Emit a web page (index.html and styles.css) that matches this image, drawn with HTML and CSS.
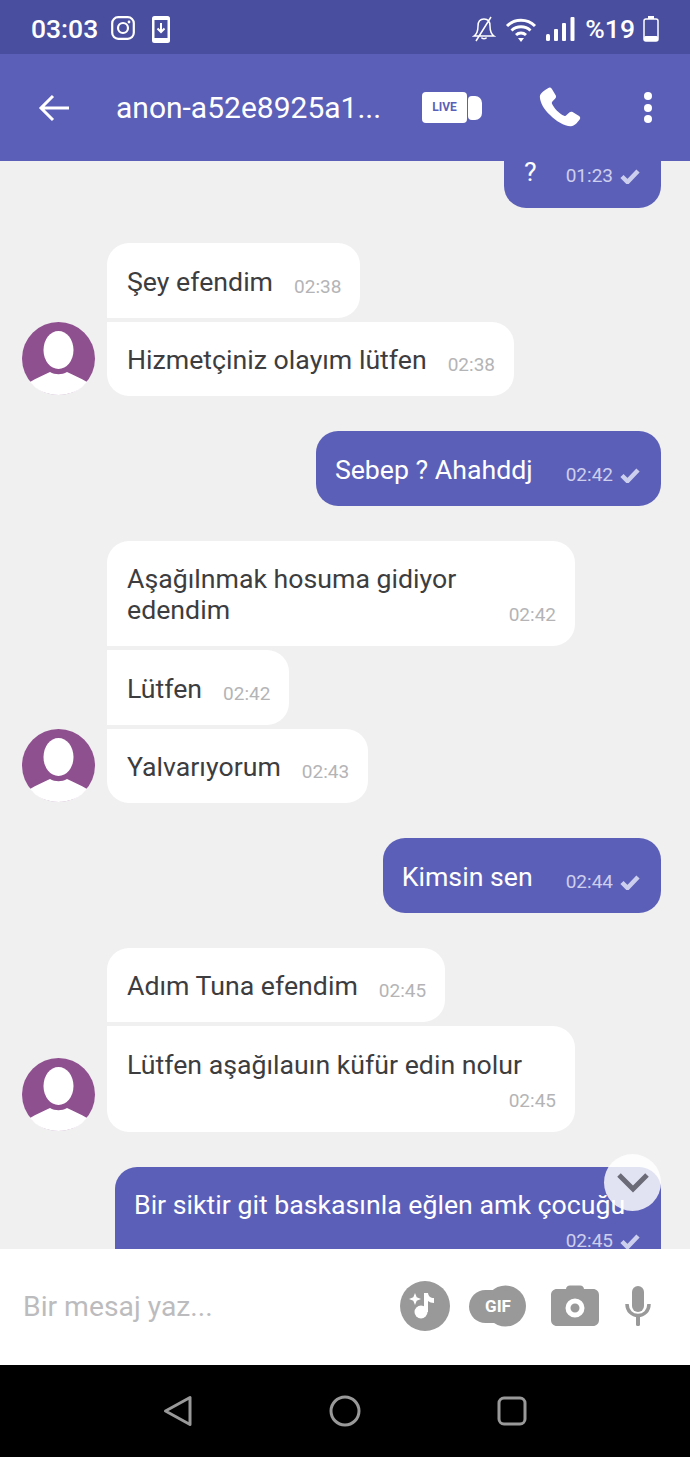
FILE: index.html
```html
<!DOCTYPE html>
<html lang="en">
<head>
  <meta charset="UTF-8" />
  <title>anon-a52e8925a1</title>
  <link rel="stylesheet" href="styles.css">
</head>
<body>
  <div class="phone">
    <div class="status">
      <span class="clock">03:03</span>
      <svg class="st-insta" viewBox="0 0 24 24" width="24" height="24"><rect x="1.2" y="1.2" width="21.6" height="21.6" rx="6" fill="none" stroke="#fff" stroke-width="2.2"/><circle cx="12" cy="12" r="5" fill="none" stroke="#fff" stroke-width="2.2"/><circle cx="18" cy="6" r="1.4" fill="#fff"/></svg>
      <svg class="st-dl" viewBox="0 0 18 27" width="18" height="27"><rect width="18" height="27" rx="2.5" fill="#fff"/><rect x="2.5" y="4" width="13" height="18" fill="#4a4e9e"/><path d="M9 7v9M5.500 12.500 9 16l3.500-3.500" fill="none" stroke="#fff" stroke-width="2"/></svg>
      <span class="st-right">
        <svg viewBox="0 0 24 26" width="24" height="26"><path d="M12 3c-4 0-6 3-6 7 0 5-1 8-4 10h20c-3-2-4-5-4-10 0-4-2-7-6-7zM9.500 21.500c.5 1.500 4.500 1.500 5 0M19 1 4 25" fill="none" stroke="#fff" stroke-width="1.500"/></svg>
        <svg class="st-wifi" viewBox="0 0 32 25" width="32" height="25"><path d="M2 9a20 20 0 0 1 28 0M6.500 13.500a14 14 0 0 1 19 0M11 18a7.500 7.500 0 0 1 10 0" fill="none" stroke="#fff" stroke-width="3"/><path d="M13 21h6l-3 4z" fill="#fff"/></svg>
        <svg class="st-sig" viewBox="0 0 29 24" width="29" height="24"><rect y="17" width="4" height="7" rx="1.500" fill="#fff"/><rect x="8" y="12" width="4" height="12" rx="1" fill="#fff"/><rect x="16" y="6" width="4" height="18" rx="1" fill="#fff"/><rect x="24.500" width="4" height="24" rx="1" fill="#fff"/></svg>
        <span class="pct">%19</span>
        <svg class="st-bat" viewBox="0 0 16 26" width="16" height="26"><rect x="5" width="6" height="3" fill="#fff"/><rect x="1" y="3" width="14" height="22" rx="2" fill="none" stroke="#fff" stroke-width="1.500"/><rect x="1" y="20" width="14" height="5" rx="1.500" fill="#fff"/></svg>
      </span>
    </div>

    <header class="appbar">
      <svg class="back" viewBox="0 0 32 28" width="32" height="28"><path d="M31 14H3M15 2 3 14l12 12" fill="none" stroke="#fff" stroke-width="3"/></svg>
      <h1 class="title">anon-a52e8925a1...</h1>
      <div class="live">
        <span class="live-box">LIVE</span>
        <span class="live-lens"></span>
      </div>
      <svg class="call" viewBox="0 0 24 24" width="52" height="52"><path d="M6.600 2.800c.5-.4 1.200-.3 1.600.3l1.800 3c.3.500.2 1.100-.2 1.500L8.500 9c-.3.300-.3.600-.2 1 .8 1.900 3.500 4.700 5.600 5.600.4.200.8.100 1-.2l1.400-1.300c.4-.4 1-.5 1.500-.2l3 1.800c.6.400.7 1.200.2 1.700-1 1.200-2.300 3.100-4.100 3-3-.1-6.800-2.400-9.500-5.200C4.700 12.900 2.800 9.500 2.700 6.800c0-1.700 2.700-3.200 3.900-4z" fill="#fff"/></svg>
      <div class="dots"><i></i><i></i><i></i></div>
    </header>

    <main class="chat">
      <div class="msg sent top-cut">
        <span class="text">?</span>
        <span class="time">01:23 <svg class="tick" viewBox="0 0 20 16" width="20" height="16"><path d="M2 8.500 7.500 14 18 3" fill="none" stroke="currentColor" stroke-width="4.500"/></svg></span>
      </div>

      <div class="group">
        <div class="avatar"><svg viewBox="0 0 73 73" width="73" height="73"><circle cx="36.500" cy="36.500" r="36.500" fill="#8f5090"/><ellipse cx="36.500" cy="28" rx="15" ry="19" fill="#fff"/><path d="M8 60c6-4 14-7 20-10 5 3 12 3 17 0 6 3 14 6 20 10-6 8-17 13-28.500 13S14 68 8 60z" fill="#fff"/></svg></div>
        <div class="stack">
          <div class="msg recv first"><span class="text">Şey efendim</span><span class="time">02:38</span></div>
          <div class="msg recv last"><span class="text">Hizmetçiniz olayım lütfen</span><span class="time">02:38</span></div>
        </div>
      </div>

      <div class="msg sent">
        <span class="text">Sebep ? Ahahddj</span>
        <span class="time">02:42 <svg class="tick" viewBox="0 0 20 16" width="20" height="16"><path d="M2 8.500 7.500 14 18 3" fill="none" stroke="currentColor" stroke-width="4.500"/></svg></span>
      </div>

      <div class="group">
        <div class="avatar"><svg viewBox="0 0 73 73" width="73" height="73"><circle cx="36.500" cy="36.500" r="36.500" fill="#8f5090"/><ellipse cx="36.500" cy="28" rx="15" ry="19" fill="#fff"/><path d="M8 60c6-4 14-7 20-10 5 3 12 3 17 0 6 3 14 6 20 10-6 8-17 13-28.500 13S14 68 8 60z" fill="#fff"/></svg></div>
        <div class="stack">
          <div class="msg recv first wide"><span class="text">Aşağılnmak hosuma gidiyor<br>edendim</span><span class="time">02:42</span></div>
          <div class="msg recv"><span class="text">Lütfen</span><span class="time">02:42</span></div>
          <div class="msg recv last"><span class="text">Yalvarıyorum</span><span class="time">02:43</span></div>
        </div>
      </div>

      <div class="msg sent">
        <span class="text">Kimsin sen</span>
        <span class="time">02:44 <svg class="tick" viewBox="0 0 20 16" width="20" height="16"><path d="M2 8.500 7.500 14 18 3" fill="none" stroke="currentColor" stroke-width="4.500"/></svg></span>
      </div>

      <div class="group">
        <div class="avatar"><svg viewBox="0 0 73 73" width="73" height="73"><circle cx="36.500" cy="36.500" r="36.500" fill="#8f5090"/><ellipse cx="36.500" cy="28" rx="15" ry="19" fill="#fff"/><path d="M8 60c6-4 14-7 20-10 5 3 12 3 17 0 6 3 14 6 20 10-6 8-17 13-28.500 13S14 68 8 60z" fill="#fff"/></svg></div>
        <div class="stack">
          <div class="msg recv first"><span class="text">Adım Tuna efendim</span><span class="time">02:45</span></div>
          <div class="msg recv last wide wrapped"><span class="text">Lütfen aşağılauın küfür edin nolur</span><span class="time">02:45</span></div>
        </div>
      </div>

      <div class="msg sent wide-sent">
        <span class="text">Bir siktir git baskasınla eğlen amk çocuğu</span>
        <span class="time">02:45 <svg class="tick" viewBox="0 0 20 16" width="20" height="16"><path d="M2 8.500 7.500 14 18 3" fill="none" stroke="currentColor" stroke-width="4.500"/></svg></span>
      </div>

      <div class="scroll-down"><svg viewBox="0 0 34 22" width="34" height="22"><path d="M3 3l14 14L31 3" fill="none" stroke="#6b6b78" stroke-width="5"/></svg></div>
    </main>

    <footer class="composer">
      <span class="placeholder">Bir mesaj yaz...</span>
      <div class="tools">
        <svg class="tool-music" viewBox="0 0 50 50" width="50" height="50"><circle cx="25" cy="25" r="25" fill="#999"/><circle cx="21" cy="31" r="6.500" fill="#fff"/><path d="M24 31V12h4c.3 3 2.500 5 6 5v5c-2.500 0-4.500-.8-6-2v11z" fill="#fff"/><path d="M15 12l1.700 4.300L21 18l-4.300 1.700L15 24l-1.700-4.300L9 18l4.300-1.700z" fill="#fff"/></svg>
        <svg class="tool-gif" viewBox="0 0 57 42" width="57" height="42"><circle cx="36.500" cy="21" r="20.500" fill="#999"/><rect y="5" width="50" height="33" rx="16.500" fill="#999"/><text x="29" y="27" text-anchor="middle" class="gif-text">GIF</text></svg>
        <svg class="tool-cam" viewBox="0 0 48 42" width="48" height="42"><path d="M15 4c.3-2 1.500-3.500 4-3.500h10c2.500 0 3.700 1.500 4 3.500h9c3.500 0 6 2.500 6 6v25c0 3.500-2.500 6-6 6H6c-3.500 0-6-2.500-6-6V10c0-3.500 2.500-6 6-6z" fill="#999"/><circle cx="24" cy="23" r="7" fill="none" stroke="#fff" stroke-width="5"/></svg>
        <svg class="tool-mic" viewBox="0 0 26 40" width="26" height="40"><rect x="7" width="12" height="26" rx="6" fill="#999"/><path d="M2 18c0 7 5 11.500 11 11.500S24 25 24 18" fill="none" stroke="#999" stroke-width="3.500"/><rect x="11" y="29" width="4" height="11" rx="1.500" fill="#999"/></svg>
      </div>
    </footer>

    <nav class="navbar">
      <svg viewBox="0 0 30 32" width="30" height="32"><path d="M27 2.500v27L2.500 16z" fill="none" stroke="#999" stroke-width="3" stroke-linejoin="round"/></svg>
      <svg viewBox="0 0 32 32" width="32" height="32"><circle cx="16" cy="16" r="14" fill="none" stroke="#999" stroke-width="3"/></svg>
      <svg viewBox="0 0 30 30" width="30" height="30"><rect x="2" y="2" width="26" height="26" rx="5" fill="none" stroke="#999" stroke-width="3"/></svg>
    </nav>
  </div>
</body>
</html>
```

FILE: styles.css
```css
* { box-sizing: border-box; margin: 0; padding: 0; }
body { font-family: Roboto, "Liberation Sans", sans-serif; background: #f0f0f1; }
.phone { width: 690px; height: 1457px; display: flex; flex-direction: column; overflow: hidden; }

.status {
  height: 54px;
  flex: none;
  display: flex;
  align-items: center;
  padding: 0 31px 0 31px;
  background: #4a4e9e;
  color: #fff;
}
.clock { font-size: 26.500px; font-weight: 500; line-height: 1; margin-top: 4px; }
.st-insta { margin-left: 13px; margin-top: 2px; }
.st-dl { margin-left: 17px; margin-top: 4px; }
.st-right { margin-left: auto; display: flex; align-items: center; }
.st-right svg { margin-top: 4px; }
.st-wifi { margin-left: 9px; }
.st-sig { margin-left: 9px; }
.pct { font-size: 26.500px; font-weight: 500; margin-left: 10px; line-height: 1; margin-top: 4px; }
.st-bat { margin-left: 8px; }

.appbar {
  height: 107px;
  flex: none;
  display: flex;
  align-items: center;
  background: #5c5fb8;
  position: relative;
  z-index: 2;
  padding-left: 38px;
  color: #fff;
}
.title { font-size: 30px; font-weight: 400; margin-left: 46px; width: 306px; white-space: nowrap; }
.live { display: flex; align-items: center; gap: 1px; }
.live-box {
  width: 45px;
  height: 31px;
  border-radius: 4px;
  background: #fff;
  color: #5c5fb8;
  font-size: 12px;
  font-weight: 700;
  text-align: center;
  line-height: 31px;
}
.live-lens { width: 14px; height: 24px; background: #fff; border-radius: 4px 7px 7px 4px; }
.call { margin-left: 52px; }
.dots { margin-left: 58px; display: flex; flex-direction: column; gap: 3.500px; }
.dots i { display: block; width: 8px; height: 8px; border-radius: 50%; background: #fff; }

.chat {
  flex: 1;
  min-height: 0;
  position: relative;
  overflow: hidden;
  display: flex;
  flex-direction: column;
  gap: 35px;
  padding: 0 29px 0 22px;
}
.msg {
  display: flex;
  align-items: flex-end;
  gap: 0 21px;
  width: fit-content;
  padding: 23.500px 19px 20px 20px;
  border-radius: 22px;
  font-size: 26.700px;
  line-height: 31px;
}
.text { white-space: nowrap; }
.time { font-size: 19px; line-height: 22px; white-space: nowrap; display: flex; align-items: center; gap: 7px; }

.sent { align-self: flex-end; background: #5c5fb8; color: #fff; padding-left: 19px; padding-right: 21px; column-gap: 33px; }
.sent .time { color: #cdcfee; }
.top-cut { padding: 0 21px 21px 20px; align-items: flex-start; column-gap: 29px; border-radius: 0 0 22px 22px; }
.top-cut .text { line-height: 22px; }
.top-cut .time { margin-top: 4px; }
.wide-sent { width: 546px; flex-wrap: wrap; justify-content: flex-end; }
.wide-sent .text { width: 100%; }
.wide-sent .time { margin-top: 9px; }

.group { display: flex; align-items: flex-end; gap: 12px; }
.avatar { width: 73px; height: 73px; flex: none; margin-bottom: 1px; }
.stack { display: flex; flex-direction: column; gap: 4px; }
.recv { background: #fff; color: #3d3d40; border-radius: 0 22px 22px 0; }
.recv .time { color: #b4b4b6; }
.recv.first { border-top-left-radius: 22px; }
.recv.last { border-bottom-left-radius: 22px; }
.wide { width: 468px; flex-wrap: wrap; justify-content: flex-end; }
.wide .text { margin-right: auto; }
.wrapped .time { margin-top: 9px; }

.scroll-down {
  position: absolute;
  left: 604px;
  top: 993px;
  width: 57px;
  height: 57px;
  border-radius: 50%;
  background: rgba(255, 255, 255, 0.82);
  display: flex;
  align-items: center;
  justify-content: center;
}

.composer {
  height: 116px;
  flex: none;
  background: #fff;
  display: flex;
  align-items: center;
  padding: 0 39px 0 23px;
  position: relative;
}
.placeholder { font-size: 28.300px; color: #bcbcbe; margin-top: -2px; }
.tools { margin-left: auto; display: flex; align-items: center; margin-top: -2px; }
.tool-music { margin-top: -1px; }
.tool-gif { margin-left: 19px; }
.tool-cam { margin-left: 25px; }
.tool-mic { margin-left: 26px; }
.gif-text { font-family: Roboto, sans-serif; font-size: 17px; font-weight: 700; fill: #fff; }

.navbar {
  height: 92px;
  flex: none;
  background: #000;
  display: flex;
  align-items: center;
  justify-content: center;
  gap: 136px;
}
```
